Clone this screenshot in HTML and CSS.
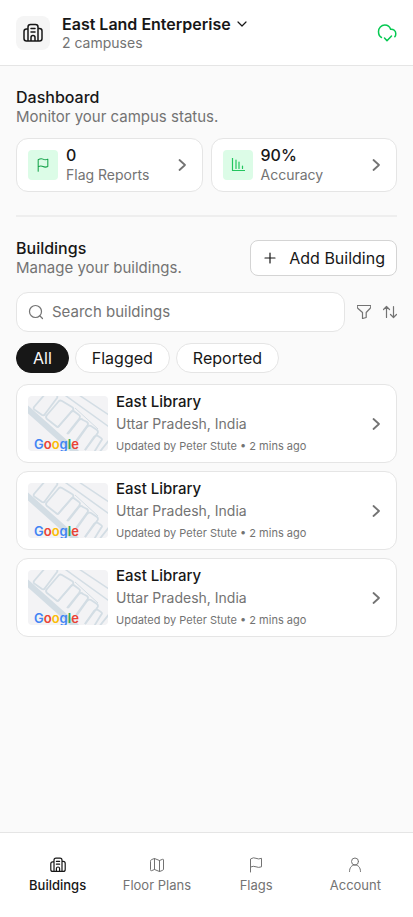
FILE: index.html
```html
<!DOCTYPE html>
<html lang="en">
<head>
<meta charset="utf-8">
<meta name="viewport" content="width=device-width, initial-scale=1">
<title>Buildings</title>
<link rel="stylesheet" href="styles.css">
</head>
<body>
<svg class="defs" aria-hidden="true">
  <symbol id="building" viewBox="0 0 20 20">
    <path d="M5 18V4q0-2.500 2.500-2.500h5Q15 1.500 15 4v14M5 6H3.500Q1 6 1 8.500v7Q1 18 3.500 18h13q2.500 0 2.500-2.500V8q0-2.500-2.500-2.500H15M8 5.500h4M8 9h4M8 18v-3.500q0-2 2-2t2 2V18"/>
  </symbol>
  <symbol id="flag" viewBox="0 0 16 16"><path d="M2.500 15V2q3-2 5.500-.7t5.500 0v8.500q-3 1.200-5.500 0t-5.500.2"/></symbol>
  <symbol id="chevron" viewBox="0 0 16 16"><path d="m4.500 3 5.500 5-5.500 5"/></symbol>
  <symbol id="map" viewBox="0 0 80 55">
    <rect width="80" height="55" fill="#f3f3f5"/>
    <g fill="none" stroke="#d3dde4">
      <path d="M-4 10 50 58" stroke-width="6"/>
      <path d="M34-3 84 33M48-3 84 21" stroke-width="1.500"/>
      <g stroke-width="1.800" stroke-linejoin="round">
        <path d="M18-3 6 11q-1 2 1 3l7 5q2 1 3-1L29 2q1-2-1-4"/>
        <path d="M19 19 31 5q1-1 3 0l10 6q2 1 1 3L31 30q-1 2-3 0l-9-7q-2-2 0-4Z"/>
        <path d="m30 31 13-15q2-2 4 0l4 3q2 1 0 4L39 38"/>
        <path d="m40 38 11-14q2-2 4 0l4 2q2 2 0 4L48 45"/>
        <path d="m49 45 10-14q2-2 4-1l6 4q2 2 0 4L57 54"/>
        <path d="m57 54 9-13q2-2 4-1l3 2q2 1 0 3l-8 13M70 58l12-15"/>
      </g>
      <path d="m47 12 23 21" stroke-width="1"/>
    </g>
  </symbol>
</svg>

<header class="topbar">
  <span class="org-icon"><svg class="icon icon-20"><use href="#building"/></svg></span>
  <div class="org">
    <button class="org-name" type="button">East Land Enterperise
      <svg class="icon icon-10" viewBox="0 0 10 10"><path d="m1 3 4 4 4-4"/></svg>
    </button>
    <p class="org-meta">2 campuses</p>
  </div>
  <button class="sync" type="button" aria-label="Synced">
    <svg class="icon icon-20" viewBox="0 0 20 20"><path d="M4.500 14.500C2.500 13.500 1.500 11.500 1.500 8.500 1.500 5 4.300 2 7.800 2c3 0 5 1.700 5.800 4.200 3-.2 5.200 1.600 5.200 4.500 0 1.200-.3 2.300-1 3.100M7.500 15l2.500 2.800 4.500-4.800"/></svg>
  </button>
</header>

<main class="content">
  <section>
    <h2 class="title">Dashboard</h2>
    <p class="subtitle">Monitor your campus status.</p>
    <div class="stats">
      <a class="card stat" href="#flags">
        <span class="stat-icon"><svg class="icon icon-14"><use href="#flag"/></svg></span>
        <span class="stat-text"><strong>0</strong><span>Flag Reports</span></span>
        <svg class="icon icon-16 chevron"><use href="#chevron"/></svg>
      </a>
      <a class="card stat" href="#accuracy">
        <span class="stat-icon bright"><svg class="icon icon-14" viewBox="0 0 14 14"><path d="M1.500 0v12.500H14M5 2v8.500M8 4v6.500M11.500 8v2.500"/></svg></span>
        <span class="stat-text"><strong>90%</strong><span>Accuracy</span></span>
        <svg class="icon icon-16 chevron"><use href="#chevron"/></svg>
      </a>
    </div>
  </section>

  <hr class="divider">

  <section>
    <div class="section-head">
      <div>
        <h2 class="title">Buildings</h2>
        <p class="subtitle">Manage your buildings.</p>
      </div>
      <button class="add" type="button">
        <svg class="icon icon-12" viewBox="0 0 12 12"><path d="M6 1v10M1 6h10"/></svg>
        Add Building
      </button>
    </div>

    <div class="tools">
      <label class="search">
        <svg class="icon icon-16" viewBox="0 0 16 16"><circle cx="7.500" cy="7.500" r="6"/><path d="m12 12 2.500 2.500"/></svg>
        <input type="search" placeholder="Search buildings" aria-label="Search buildings">
      </label>
      <button class="tool" type="button" aria-label="Filter">
        <svg class="icon icon-14" viewBox="1 1 14 14"><path d="M1.500 1.500h13q.8 1.800-.5 3L10.200 8.500v5L6.500 14.500V8.500L2 4.500q-1.300-1.200-.5-3Z"/></svg>
      </button>
      <button class="tool" type="button" aria-label="Sort">
        <svg class="icon icon-14" viewBox="1 1 14 14"><path d="M4.500 13.500v-11M1.500 5.500l3-3 3 3M11.500 2.500v11M8.500 10.500l3 3 3-3"/></svg>
      </button>
    </div>

    <div class="chips">
      <button class="chip active" type="button">All</button>
      <button class="chip" type="button">Flagged</button>
      <button class="chip" type="button">Reported</button>
    </div>

    <div class="list">
      <a class="card building" href="#b1">
        <div class="thumb"><svg viewBox="0 0 80 55"><use href="#map"/></svg><span class="map-logo"><i class="blue">G</i><i class="red">o</i><i class="yellow">o</i><i class="blue">g</i><i class="green">l</i><i class="red">e</i></span></div>
        <div class="details"><h3>East Library</h3><p class="place">Uttar Pradesh, India</p><p class="updated">Updated by Peter Stute • 2 mins ago</p></div>
        <svg class="icon icon-16 chevron"><use href="#chevron"/></svg>
      </a>
      <a class="card building" href="#b2">
        <div class="thumb"><svg viewBox="0 0 80 55"><use href="#map"/></svg><span class="map-logo"><i class="blue">G</i><i class="red">o</i><i class="yellow">o</i><i class="blue">g</i><i class="green">l</i><i class="red">e</i></span></div>
        <div class="details"><h3>East Library</h3><p class="place">Uttar Pradesh, India</p><p class="updated">Updated by Peter Stute • 2 mins ago</p></div>
        <svg class="icon icon-16 chevron"><use href="#chevron"/></svg>
      </a>
      <a class="card building" href="#b3">
        <div class="thumb"><svg viewBox="0 0 80 55"><use href="#map"/></svg><span class="map-logo"><i class="blue">G</i><i class="red">o</i><i class="yellow">o</i><i class="blue">g</i><i class="green">l</i><i class="red">e</i></span></div>
        <div class="details"><h3>East Library</h3><p class="place">Uttar Pradesh, India</p><p class="updated">Updated by Peter Stute • 2 mins ago</p></div>
        <svg class="icon icon-16 chevron"><use href="#chevron"/></svg>
      </a>
    </div>
  </section>
</main>

<nav class="tabs">
  <a class="tab active" href="#buildings"><svg class="icon icon-16"><use href="#building"/></svg>Buildings</a>
  <a class="tab" href="#plans"><svg class="icon icon-16" viewBox="0 0 16 16"><path d="M1.500 4q0-1 1-1.400L5.500 1.500l5 2 3-1.200q1-.3 1 .7v9q0 1-1 1.400l-3 1.100-5-2-3 1.200q-1 .3-1-.7ZM5.500 1.500v11M10.500 3.500v11"/></svg>Floor Plans</a>
  <a class="tab" href="#flags"><svg class="icon icon-16"><use href="#flag"/></svg>Flags</a>
  <a class="tab" href="#account"><svg class="icon icon-16" viewBox="0 0 16 16"><circle cx="8" cy="4.500" r="3.500"/><path d="M2.500 14.500c0-4 2.200-6.500 5.500-6.500s5.500 2.500 5.500 6.500"/></svg>Account</a>
</nav>
</body>
</html>
```
FILE: styles.css
```css
* { box-sizing: border-box; }

body {
  margin: 0;
  min-height: 100vh;
  display: flex;
  flex-direction: column;
  background: #fafafa;
  color: #171717;
  font: 400 15px/20px Inter, "Liberation Sans", sans-serif;
}

h2, h3, p { margin: 0; font-weight: 400; }
a { color: inherit; text-decoration: none; }
button {
  margin: 0;
  padding: 0;
  border: 0;
  background: none;
  color: inherit;
  font: inherit;
}

.defs { position: absolute; width: 0; height: 0; }
.icon {
  flex: none;
  fill: none;
  stroke: currentColor;
  stroke-width: 1.2;
  stroke-linecap: round;
  stroke-linejoin: round;
}
.icon-10 { width: 10px; height: 10px; }
.icon-12 { width: 12px; height: 12px; }
.icon-14 { width: 14px; height: 14px; }
.icon-16 { width: 16px; height: 16px; }
.icon-20 { width: 20px; height: 20px; }

.topbar {
  display: flex;
  align-items: center;
  gap: 12px;
  padding: 14px 16px;
  background: #fff;
  border-bottom: 1px solid #e5e5e5;
}
.org-icon {
  display: grid;
  place-items: center;
  width: 34px;
  height: 34px;
  border-radius: 8px;
  background: #f5f5f5;
}
.org-icon .icon { stroke-width: 1.5; }
.org { flex: 1; }
.org-name {
  display: flex;
  align-items: center;
  gap: 6px;
  font-size: 16px;
  font-weight: 600;
}
.org-meta {
  color: #737373;
  font-size: 14px;
  line-height: 17px;
}
.sync { display: grid; color: #05c951; }
.sync .icon { stroke-width: 1.5; }

.content { flex: 1; padding: 21px 16px; }
.title { font-size: 16px; font-weight: 500; }
.subtitle { color: #737373; }

.card {
  display: flex;
  align-items: center;
  gap: 8px;
  padding: 11px;
  background: #fff;
  border: 1px solid #e5e5e5;
  border-radius: 12px;
}
.chevron {
  margin-left: auto;
  color: #737373;
  stroke-width: 1.8;
}

.stats {
  display: grid;
  grid-template-columns: 1fr 1fr;
  gap: 8px;
  margin-top: 11px;
}
.stat-icon {
  display: grid;
  place-items: center;
  width: 30px;
  height: 30px;
  border-radius: 4px;
  background: #dcfce7;
  color: #16a34a;
}
.stat-icon.bright { color: #22c55e; }
.stat-text {
  display: grid;
  margin: -4px 0;
  color: #737373;
  font-size: 14px;
  line-height: 19px;
}
.stat-text strong { color: #171717; font-size: 16px; font-weight: 500; }

.divider {
  height: 2px;
  margin: 23px 0;
  border: 0;
  background: #eee;
}

.section-head { display: flex; justify-content: space-between; align-items: center; height: 36px; }
.add {
  display: flex;
  align-items: center;
  gap: 13px;
  height: 36px;
  padding: 0 11px 0 13px;
  background: #fff;
  border: 1px solid #d4d4d4;
  border-radius: 8px;
  font-size: 16px;
}

.tools {
  display: flex;
  align-items: center;
  gap: 12px;
  margin-top: 16px;
}
.search {
  display: flex;
  flex: 1;
  align-items: center;
  gap: 8px;
  height: 40px;
  padding: 0 11px;
  background: #fff;
  border: 1px solid #e5e5e5;
  border-radius: 12px;
  color: #737373;
}
.search input {
  flex: 1;
  min-width: 0;
  padding: 0;
  border: 0;
  outline: 0;
  background: none;
  color: #171717;
  font: inherit;
}
.search input::placeholder { color: #737373; opacity: 1; }
.tool { display: grid; color: #737373; }

.chips { display: flex; gap: 6px; margin-top: 11px; }
.chip {
  height: 30px;
  padding: 0 16px;
  background: #fff;
  border: 1px solid #e5e5e5;
  border-radius: 15px;
  font-size: 16px;
}
.chip.active { background: #171717; border-color: #171717; color: #fafafa; }

.list { display: grid; gap: 8px; margin-top: 11px; }
.building { height: 79px; }
.thumb {
  position: relative;
  flex: none;
  width: 80px;
  height: 55px;
  border-radius: 4px;
  overflow: hidden;
}
.thumb svg { display: block; width: 100%; height: 100%; }
.map-logo {
  position: absolute;
  left: 6px;
  bottom: 0;
  font-size: 13px;
  font-weight: 600;
  line-height: 13px;
}
.map-logo i { font-style: normal; }
.blue { color: #4285f4; }
.red { color: #ea4335; }
.yellow { color: #fbbc05; }
.green { color: #34a853; }

.details { color: #737373; }
.details h3 { color: #171717; font-size: 15px; font-weight: 500; line-height: 22px; }
.place { font-size: 14px; line-height: 22px; }
.updated { font-size: 11px; line-height: 22px; }

.tabs {
  display: grid;
  grid-template-columns: repeat(4, 1fr);
  height: 85px;
  padding: 24px 8px 0;
  background: #fff;
  border-top: 1px solid #e5e5e5;
}
.tab {
  display: flex;
  flex-direction: column;
  align-items: center;
  gap: 2px;
  color: #737373;
  font-size: 13px;
}
.tab .icon { stroke-width: 1; }
.tab.active { color: #171717; font-weight: 500; }
.tab.active .icon { stroke-width: 1.5; }
```
